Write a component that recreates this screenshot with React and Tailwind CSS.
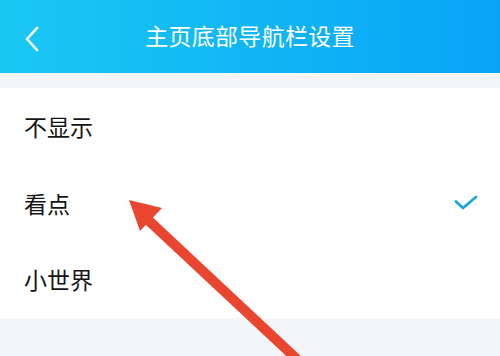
import { useState } from "react";

const OPTIONS = [
  { key: "none", label: "不显示" },
  { key: "kandian", label: "看点" },
  { key: "world", label: "小世界" },
];

export default function App() {
  const [selected, setSelected] = useState("kandian");

  return (
    <div
      className="relative w-[500px] h-[356px] overflow-hidden bg-[#f4f5f8]"
      style={{ fontFamily: '"Noto Sans CJK SC", "Noto Sans", sans-serif' }}
    >
      {/* Header */}
      <div className="relative h-[73px] flex items-center justify-center bg-gradient-to-r from-[#1bc8f3] to-[#0aa4f6]">
        <button className="absolute left-[22px] top-[25px] text-white">
          <svg width="20" height="28" viewBox="0 0 20 28" fill="none">
            <path d="M15 3L5 14l10 11" stroke="white" strokeWidth="2.6" strokeLinecap="round" strokeLinejoin="round" />
          </svg>
        </button>
        <h1 className="text-white text-[23px] leading-none tracking-[0.3px] mt-[-2px]">主页底部导航栏设置</h1>
      </div>

      <div className="h-[15px] bg-[#f4f5f8]" />

      {/* Options */}
      <div className="bg-white">
        {OPTIONS.map(opt => (
          <div
            key={opt.key}
            onClick={() => setSelected(opt.key)}
            className="h-[76.7px] flex items-center justify-between pl-[24px] pr-[22px]"
          >
            <span className="text-[23px] text-[#151515] leading-none">{opt.label}</span>
            {selected === opt.key && (
              <svg width="24" height="16" viewBox="0 0 24 16" fill="none">
                <path d="M2 6.5l7 6.5L22 2" stroke="#1aa6d2" strokeWidth="2.8" strokeLinecap="round" strokeLinejoin="round" />
              </svg>
            )}
          </div>
        ))}
      </div>

      {/* Annotation arrow */}
      <svg className="absolute inset-0 pointer-events-none" width="500" height="356" viewBox="0 0 500 356">
        <line x1="300" y1="362" x2="146" y2="218" stroke="#e8462f" strokeWidth="10" />
        <polygon points="129,200 162,208 140,231" fill="#e8462f" />
      </svg>
    </div>
  );
}
